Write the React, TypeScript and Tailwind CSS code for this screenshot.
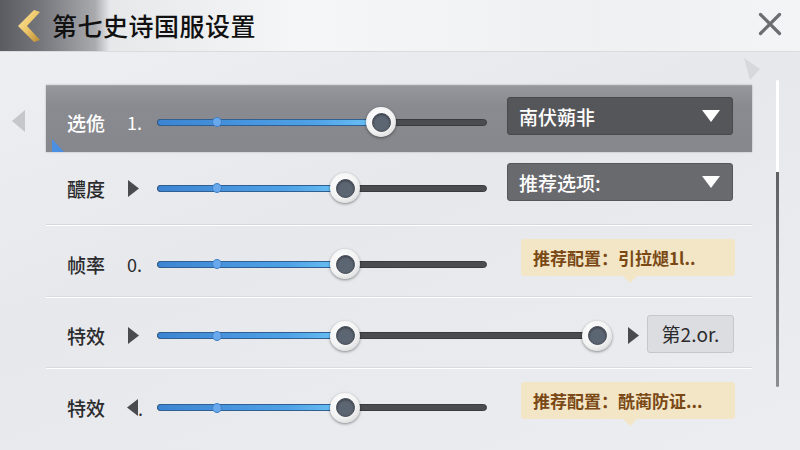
import React from "react";

const FONT = { fontFamily: '"Noto Sans CJK SC", "Noto Sans", sans-serif' };

function Thumb({ x }: { x: number }) {
  return (
    <div
      className="absolute top-1/2 w-[30px] h-[30px] -mt-[15px] -ml-[15px] rounded-full bg-[radial-gradient(circle_at_40%_35%,#ffffff_0%,#f2f2f2_55%,#c9cace_100%)] shadow-[0_1px_3px_rgba(0,0,0,0.45)] flex items-center justify-center"
      style={{ left: x }}
    >
      <div className="w-[19px] h-[19px] rounded-full bg-[#5c6572] border border-[#454c56] shadow-[inset_0_1px_2px_rgba(0,0,0,0.4)]" />
    </div>
  );
}

function Slider({ width, fill, thumbs }: { width: number; fill: number; thumbs: number[] }) {
  return (
    <div className="relative h-[30px] shrink-0" style={{ width }}>
      <div className="absolute left-0 right-0 top-1/2 -mt-[3.5px] h-[7px] rounded-full bg-[#4b4c4f] border border-[#3a3b3d]" />
      <div
        className="absolute left-0 top-1/2 -mt-[3.5px] h-[7px] rounded-l-full bg-[linear-gradient(90deg,#3c84d2,#4fa2e6_70%,#6cc4f4)] border border-[#2f5f93]"
        style={{ width: fill }}
      />
      <div className="absolute left-[55px] top-1/2 -mt-[5px] w-[10px] h-[10px] rounded-full bg-[#6aa8ec] border border-[#3f7fc8]" />
      {thumbs.map((t, i) => (
        <Thumb key={i} x={t} />
      ))}
    </div>
  );
}

function Dropdown({ text, dark }: { text: string; dark?: boolean }) {
  return (
    <div
      className={
        "w-[226px] h-[38px] rounded-[3px] flex items-center justify-between pl-[11px] pr-[12px] border " +
        (dark ? "bg-[#555659] border-[#48494c]" : "bg-[#696a6e] border-[#55565a]")
      }
    >
      <span className="text-white text-[19px] font-medium leading-none">{text}</span>
      <svg width="18" height="12" viewBox="0 0 18 12">
        <polygon points="0,0 18,0 9,12" fill="#ffffff" />
      </svg>
    </div>
  );
}

function Tip({ text }: { text: string }) {
  return (
    <div className="relative w-[214px] h-[37px] rounded-[3px] bg-[#f2e6c6] flex items-center pl-[12px] ml-[14px]">
      <span className="text-[#7a4815] text-[17px] font-bold leading-none whitespace-nowrap">{text}</span>
      <div className="absolute left-[102px] -bottom-[7px] w-0 h-0 border-l-[7px] border-r-[7px] border-t-[7px] border-l-transparent border-r-transparent border-t-[#f2e6c6]" />
    </div>
  );
}

function Tri({ dir }: { dir: "r" | "l" }) {
  return (
    <svg width="11" height="17" viewBox="0 0 11 17">
      {dir === "r" ? (
        <polygon points="0,0 11,8.5 0,17" fill="#4a4b4e" />
      ) : (
        <polygon points="11,0 0,8.5 11,17" fill="#4a4b4e" />
      )}
    </svg>
  );
}

function Label({ text, light }: { text: string; light?: boolean }) {
  return (
    <div className={"w-[60px] shrink-0 text-[19px] font-medium leading-none " + (light ? "text-white" : "text-[#2b2b2d]")}>
      {text}
    </div>
  );
}

export default function App() {
  return (
    <div
      className="w-[800px] h-[450px] overflow-hidden flex flex-col bg-[linear-gradient(160deg,#eef0f3_0%,#e6e8ec_45%,#ebedf0_100%)]"
      style={FONT}
    >
      {/* Header */}
      <div className="h-[52px] shrink-0 flex items-center relative bg-[linear-gradient(90deg,#5a5c61_0px,#74767b_40px,#a8aaae_95px,#e6e8ea_110px,#f5f6f8_300px,#eef0f2_600px,#f3f4f6_800px)] border-b border-[#d9dbdf]">
        <div className="w-[52px] shrink-0 flex justify-center pl-[6px]">
          <svg width="24" height="34" viewBox="0 0 24 34">
            <defs>
              <linearGradient id="gold" x1="0" y1="0" x2="1" y2="1">
                <stop offset="0" stopColor="#fbe7a6" />
                <stop offset="0.5" stopColor="#efc86a" />
                <stop offset="1" stopColor="#b98a33" />
              </linearGradient>
            </defs>
            <polygon points="17,1 23,3 10,17 23,31 17,33 1,17" fill="url(#gold)" />
          </svg>
        </div>
        <div className="text-[25px] font-medium text-[#111] leading-none tracking-[0.5px]">第七史诗国服设置</div>
        <div className="flex-1" />
        <div className="w-[60px] flex justify-center pb-[4px]">
          <svg width="24" height="24" viewBox="0 0 24 24">
            <path d="M2.5 2.5 L21.5 21.5 M21.5 2.5 L2.5 21.5" stroke="#6c6d71" strokeWidth="3.2" strokeLinecap="round" />
          </svg>
        </div>
      </div>

      {/* Body */}
      <div className="flex-1 flex">
        <div className="w-[46px] shrink-0 flex flex-col items-center pt-[58px] pr-[10px]">
          <svg width="13" height="22" viewBox="0 0 13 22">
            <polygon points="13,0 0,11 13,22" fill="#c5c7cb" />
          </svg>
        </div>

        <div className="w-[706px] shrink-0 flex flex-col pt-[33px]">
          {/* Row 1 highlighted */}
          <div className="relative h-[67px] bg-[linear-gradient(180deg,#96979c,#8a8b90_30%,#86878c)] border-t border-[#a3a4a8] shadow-[0_0_2px_rgba(0,0,0,0.25)] flex items-center pl-[21px] pt-[6px]">
            <Label text="选佹" light />
            <div className="w-[30px] text-white text-[18px] leading-none">1.</div>
            <Slider width={330} fill={224} thumbs={[224]} />
            <div className="ml-[20px] -mt-[12px]">
              <Dropdown text="南伏蒴非" dark />
            </div>
            <svg className="absolute left-[6px] bottom-0" width="12" height="13" viewBox="0 0 12 13">
              <polygon points="0,0 0,13 12,13" fill="#4a8fe2" />
            </svg>
          </div>

          {/* Row 2 */}
          <div className="h-[73px] border-b border-[#d6d8dc] flex items-center pl-[21px]">
            <Label text="醲度" />
            <div className="w-[30px] flex items-center pl-[1px]">
              <Tri dir="r" />
            </div>
            <Slider width={330} fill={188} thumbs={[188]} />
            <div className="ml-[20px] -mt-[12px]">
              <Dropdown text="推荐选项:" />
            </div>
          </div>

          {/* Row 3 */}
          <div className="h-[72px] border-t border-white border-b border-b-[#d9dbdf] flex items-center pl-[21px] pt-[6px]">
            <Label text="帧率" />
            <div className="w-[30px] text-[#2b2b2d] text-[18px] leading-none">0.</div>
            <Slider width={330} fill={188} thumbs={[188]} />
            <div className="ml-[20px] -mt-[14px]">
              <Tip text="推荐配置：引拉煺1l.." />
            </div>
          </div>

          {/* Row 4 */}
          <div className="h-[71px] border-t border-white border-b border-b-[#d9dbdf] flex items-center pl-[21px] pt-[6px]">
            <Label text="特效" />
            <div className="w-[30px] flex items-center pl-[1px]">
              <Tri dir="r" />
            </div>
            <Slider width={440} fill={188} thumbs={[188, 440]} />
            <div className="ml-[31px] flex items-center">
              <Tri dir="r" />
            </div>
            <div className="ml-[8px] w-[87px] h-[38px] -mt-[4px] rounded-[3px] bg-[#dcdde0] border border-[#c6c7cb] flex items-center justify-center text-[#2b2b2d] text-[19px] leading-none">
              第2.or.
            </div>
          </div>

          {/* Row 5 */}
          <div className="h-[72px] border-t border-white flex items-center pl-[21px] pt-[6px]">
            <Label text="特效" />
            <div className="w-[30px] flex items-center text-[#2b2b2d] text-[18px] leading-none">
              <Tri dir="l" />
              <span>.</span>
            </div>
            <Slider width={330} fill={188} thumbs={[188]} />
            <div className="ml-[20px] -mt-[14px]">
              <Tip text="推荐配置：酰蔺防证..." />
            </div>
          </div>
        </div>

        <div className="flex-1 relative">
          <svg className="absolute left-[-8px] top-[6px]" width="16" height="22" viewBox="0 0 16 22">
            <polygon points="0,0 16,11 6,22" fill="#d6d8dc" />
          </svg>
          <div className="ml-[24px] mt-[28px] w-[3px] flex flex-col">
            <div className="h-[92px] bg-white rounded-t-full" />
            <div className="h-[215px] bg-[linear-gradient(180deg,#5f6064,#7a7b7f_60%,#8c8d91)] rounded-b-full" />
          </div>
        </div>
      </div>
    </div>
  );
}
